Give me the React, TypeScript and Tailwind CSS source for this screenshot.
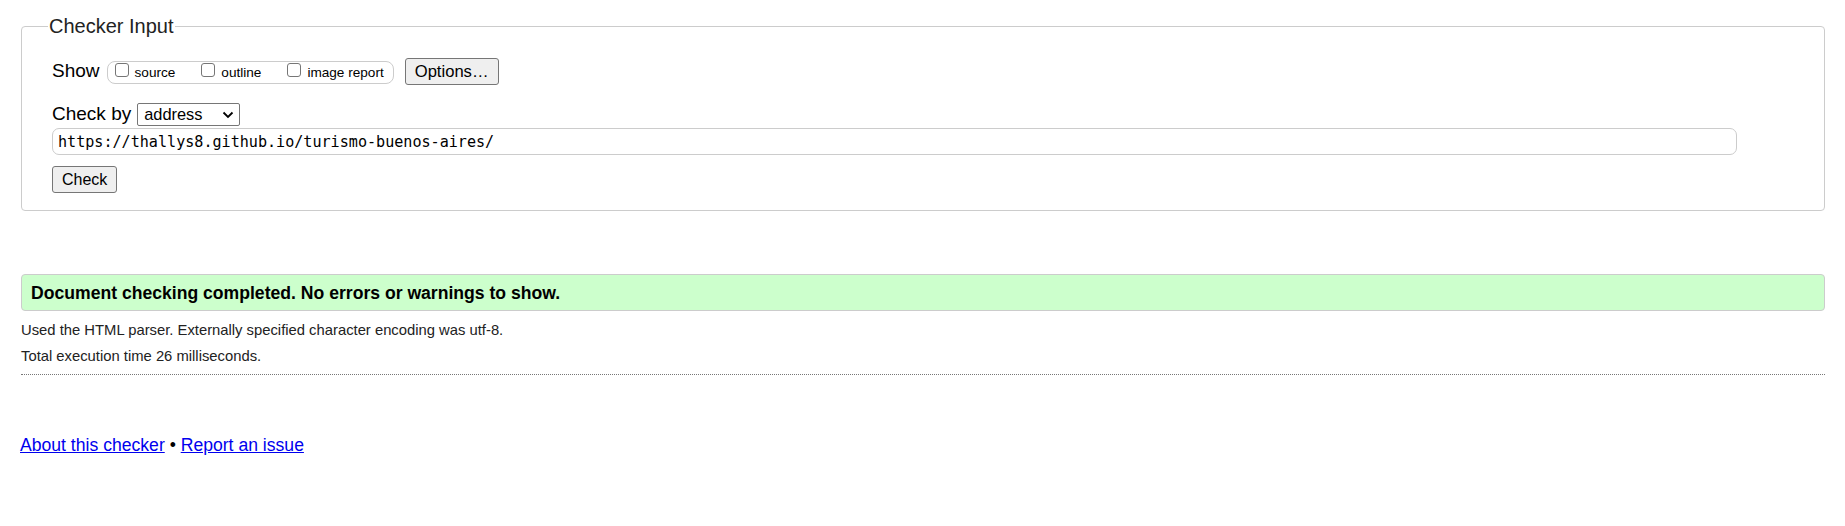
import React from 'react';

function Box({ label, first }: { label: string; first?: boolean }) {
    return (
        <label className={`flex items-baseline ${first ? '' : 'ml-[26px]'}`}>
            <span className="inline-block w-[14px] h-[14px] border border-[#767676] rounded-[3px] bg-white" />
            <span className="ml-[6px] text-[13.6px] leading-[15px]">{label}</span>
        </label>
    );
}

export default function App() {
    return (
        <div className="min-h-[526px] bg-white text-black font-['Liberation_Sans',Arial,sans-serif] pt-[15px]">
            <fieldset className="ml-[21px] mr-[20px] border border-[#cccccc] rounded-[4px] pl-[30px] pr-[30px] pt-[20px] pb-[17px]">
                <legend className="-ml-[4px] px-[1px] text-[20px] leading-[23px] text-[#222]">Checker Input</legend>

                <div className="flex items-baseline">
                    <span className="text-[19px] leading-[22px]">Show</span>
                    <div className="ml-[7px] flex items-baseline h-[23px] border border-[#cccccc] rounded-[8px] pl-[7px] pr-[9px] pt-[1px]">
                        <Box label="source" first />
                        <Box label="outline" />
                        <Box label="image report" />
                    </div>
                    <button className="ml-[11px] border border-[#767676] bg-[#efefef] rounded-[3px] px-[9px] py-[3px] text-[16.6px] leading-[19px]">
                        Options…
                    </button>
                </div>

                <div className="mt-[18px] flex items-baseline">
                    <span className="text-[19px] leading-[22px]">Check by</span>
                    <span className="ml-[6px] inline-flex items-center w-[103px] h-[23px] border border-[#767676] rounded-[2px] pl-[6px] pr-[5px] text-[16.4px] leading-[19px]">
                        <span className="flex-1">address</span>
                        <svg width="12" height="8" viewBox="0 0 12 8" fill="none">
                            <path d="M1.5 1.5 L6 6 L10.5 1.5" stroke="#000" strokeWidth="1.8" />
                        </svg>
                    </span>
                </div>

                <div className="mt-[2px] mr-[57px] flex items-center h-[27px] border border-[#cccccc] rounded-[7px] pl-[5px] font-['DejaVu_Sans_Mono',monospace] text-[15.1px] leading-[18px]">
                    https://thallys8.github.io/turismo-buenos-aires/
                </div>

                <button className="block mt-[11px] border border-[#767676] bg-[#efefef] rounded-[3px] px-[9px] py-[3px] text-[16px] leading-[19px]">
                    Check
                </button>
            </fieldset>

            <div className="mt-[63px] ml-[21px] mr-[20px] h-[37px] flex items-center border border-[#cccccc] rounded-[4px] bg-[#ccffcc] px-[9px]">
                <strong className="text-[17.6px] leading-[20px] font-bold">
                    Document checking completed. No errors or warnings to show.
                </strong>
            </div>

            <div className="ml-[21px] mr-[20px] mt-[6px] text-[14.8px] leading-[26px] text-[#222]">
                <p>Used the HTML parser. Externally specified character encoding was utf-8.</p>
                <p>Total execution time 26 milliseconds.</p>
            </div>

            <div className="ml-[21px] mr-[20px] mt-[5px] border-t border-dotted border-[#777]" />

            <p className="ml-[20px] mt-[60px] text-[17.6px] leading-[20px]">
                <a href="#" className="text-[#0000ee] underline">About this checker</a>
                {' • '}
                <a href="#" className="text-[#0000ee] underline">Report an issue</a>
            </p>
        </div>
    );
}
